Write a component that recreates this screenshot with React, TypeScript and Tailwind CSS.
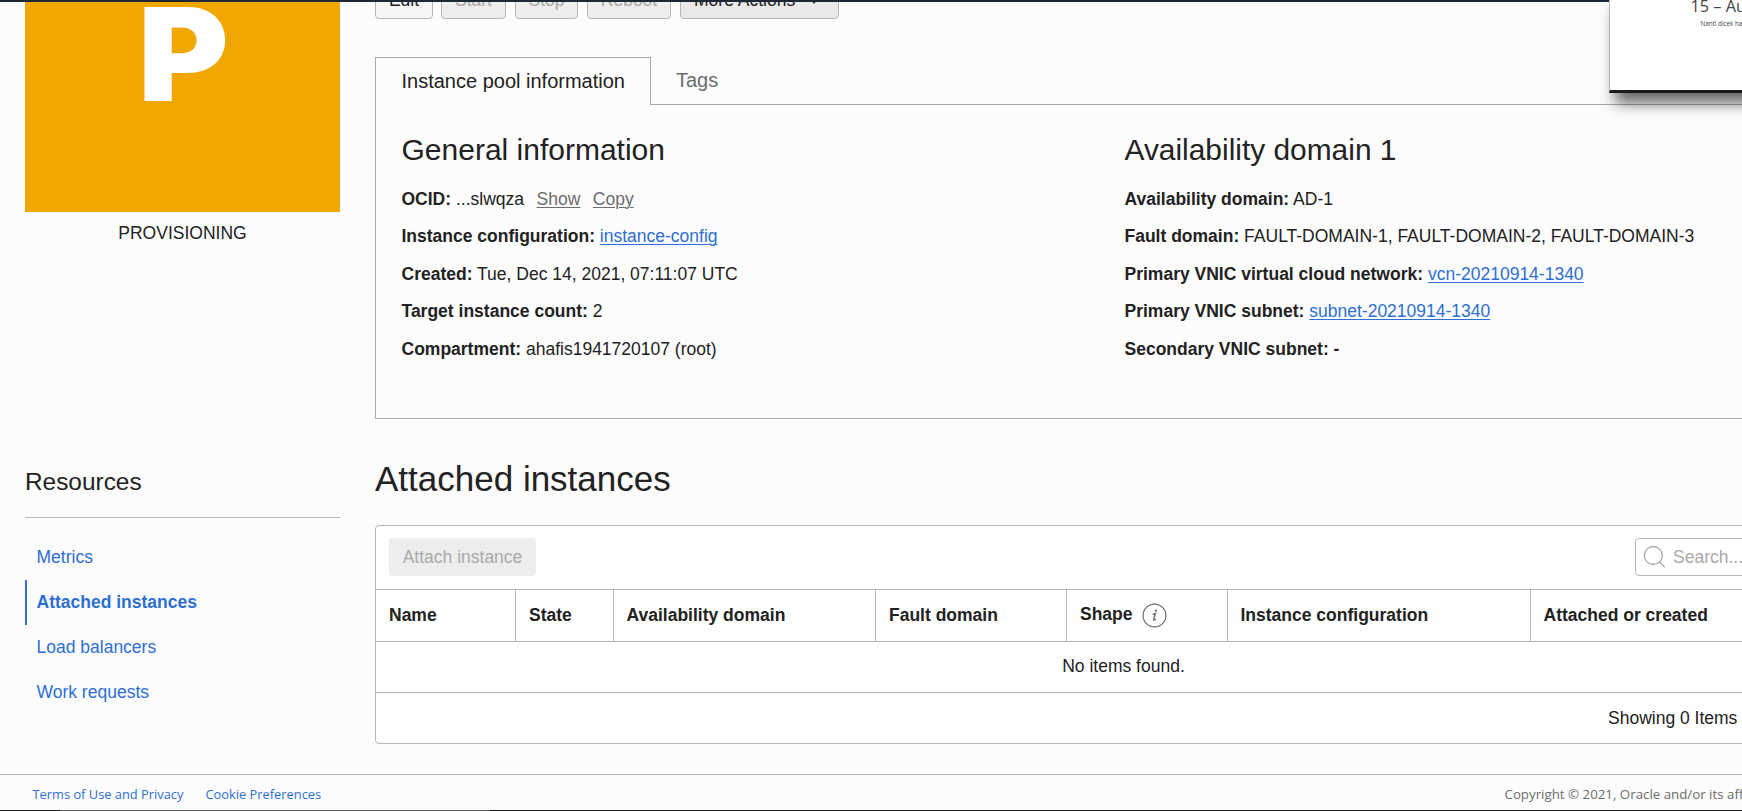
import type { ReactNode } from "react";

function TopButton({ className, children }: { className: string; children: ReactNode }) {
  return (
    <button
      className={`flex h-[38px] shrink-0 items-center rounded-[4px] border border-[#b3b7bf] text-[17.5px] leading-5 whitespace-nowrap ${className}`}
    >
      {children}
    </button>
  );
}

function Field({ label, children }: { label: string; children: ReactNode }) {
  return (
    <div className="h-[37.5px] whitespace-nowrap">
      <span className="font-bold">{label}</span> {children}
    </div>
  );
}

function Link({ children }: { children: ReactNode }) {
  return (
    <a className="text-[#2d6fd2] underline decoration-1 underline-offset-[2px]">{children}</a>
  );
}

function InfoIcon() {
  return (
    <svg width="25" height="25" viewBox="0 0 25 25" fill="none" className="shrink-0">
      <circle cx="12.5" cy="12.5" r="11.4" stroke="#6c6c6c" strokeWidth="1.2" />
      <circle cx="13.9" cy="7.7" r="1.15" fill="#6c6c6c" />
      <path d="M10.6 11.4l2.8-.9-1.7 5.8c-.3 1.2.9.9 2.2-.3" stroke="#6c6c6c" strokeWidth="1.4" />
    </svg>
  );
}

function SearchIcon() {
  return (
    <svg width="24" height="24" viewBox="0 0 24 24" fill="none" stroke="#a9a9a9" strokeWidth="1.3" className="shrink-0">
      <circle cx="10.3" cy="10.5" r="9" />
      <path d="M16.5 16.8l5.3 5.6" />
    </svg>
  );
}

function Sidebar() {
  return (
    <aside className="flex w-[315px] shrink-0 flex-col">
      <div className="h-[212px] bg-[#f0a702] pl-[113px]">
        <span className="block h-[157px] origin-left scale-x-[1.07] font-['Inter'] text-[129px] leading-[108px] font-black text-white">
          P
        </span>
      </div>
      <div className="mt-[9px] text-center text-[17.5px] leading-[24px]">PROVISIONING</div>
      <h2 className="mt-[222px] h-[51px] border-b border-[#b5b8bc] text-[24.4px] leading-[30px]">Resources</h2>
      <nav className="mt-[17px] flex flex-col text-[17.5px] text-[#2d6fd2]">
        <a className="flex h-[45px] items-center pl-[11.5px]">Metrics</a>
        <a className="flex h-[45px] items-center border-l-2 border-[#2d6fd2] pl-[9.5px] font-bold">
          Attached instances
        </a>
        <a className="flex h-[45px] items-center pl-[11.5px]">Load balancers</a>
        <a className="flex h-[45px] items-center pl-[11.5px]">Work requests</a>
      </nav>
    </aside>
  );
}

function InfoPanel() {
  return (
    <section>
      <div className="relative z-10 -mb-px flex h-[48px]">
        <div className="flex w-[276px] items-center border border-b-0 border-[#a9a9a9] bg-[#fcfcfc] pb-[2px] pl-[25.5px] text-[20px] whitespace-nowrap">
          Instance pool information
        </div>
        <div className="flex h-[46px] items-center pl-[25px] text-[20px] text-[#6c6c6c]">Tags</div>
      </div>
      <div className="flex h-[315px] border border-[#a9a9a9] pt-[26px] pl-[25.5px] text-[17.5px] leading-[24px]">
        <div className="w-[723px] shrink-0">
          <h2 className="mb-[17.6px] text-[30px] leading-[38px] whitespace-nowrap">General information</h2>
          <Field label="OCID:">
            ...slwqza
            <a className="ml-[12.5px] text-[#6c6c6c] underline decoration-1 underline-offset-[2px]">Show</a>
            <a className="ml-[12.5px] text-[#6c6c6c] underline decoration-1 underline-offset-[2px]">Copy</a>
          </Field>
          <Field label="Instance configuration:">
            <Link>instance-config</Link>
          </Field>
          <Field label="Created:">Tue, Dec 14, 2021, 07:11:07 UTC</Field>
          <Field label="Target instance count:">2</Field>
          <Field label="Compartment:">ahafis1941720107 (root)</Field>
        </div>
        <div className="shrink-0">
          <h2 className="mb-[17.6px] text-[29.9px] leading-[38px] whitespace-nowrap">Availability domain 1</h2>
          <Field label="Availability domain:">AD-1</Field>
          <Field label="Fault domain:">FAULT-DOMAIN-1, FAULT-DOMAIN-2, FAULT-DOMAIN-3</Field>
          <Field label="Primary VNIC virtual cloud network:">
            <Link>vcn-20210914-1340</Link>
          </Field>
          <Field label="Primary VNIC subnet:">
            <Link>subnet-20210914-1340</Link>
          </Field>
          <Field label="Secondary VNIC subnet:">
            <span className="font-bold">-</span>
          </Field>
        </div>
      </div>
    </section>
  );
}

function InstancesTable() {
  return (
    <div className="h-[219px] rounded-[4px] border border-[#b3b7bf] bg-white text-[17.5px]">
      <div className="flex h-[63px] items-start pt-[12px] pl-[13px]">
        <button className="flex h-[38px] w-[147px] items-center justify-center rounded-[4px] bg-[#ededed] whitespace-nowrap text-[#a9a9a9]">
          Attach instance
        </button>
        <div className="ml-[1099px] flex h-[38px] w-[224px] items-center rounded-[4px] border border-[#b3b7bf] pl-[7px] text-[#a9a9a9]">
          <SearchIcon />
          <span className="ml-[6px]">Search...</span>
        </div>
      </div>
      <div className="grid h-[53px] grid-cols-[140px_98px_262px_191px_161px_303px_1fr] divide-x divide-[#b3b7bf] border-y border-[#b3b7bf] font-bold whitespace-nowrap">
        <div className="flex items-center pl-[13px]">Name</div>
        <div className="flex items-center pl-[13px]">State</div>
        <div className="flex items-center pl-[12.5px]">Availability domain</div>
        <div className="flex items-center pl-[13px]">Fault domain</div>
        <div className="flex items-center gap-[9.5px] pl-[13px]">
          <span className="-mt-[2px]">Shape</span>
          <InfoIcon />
        </div>
        <div className="flex items-center pl-[12.5px]">Instance configuration</div>
        <div className="flex items-center pl-[12.5px]">Attached or created</div>
      </div>
      <div className="flex h-[51px] items-center justify-center border-b border-[#b3b7bf] pb-[2px]">No items found.</div>
      <div className="flex h-[50px] items-center pl-[1232px] whitespace-nowrap">Showing 0 Items</div>
    </div>
  );
}

export default function App() {
  return (
    <div className="relative flex h-[811px] w-full flex-col overflow-hidden bg-[#fcfcfc] font-['Liberation_Sans',Arial,sans-serif] text-[#222222]">
      <div className="flex h-[774px] shrink-0 gap-[35px] pl-[25px]">
        <Sidebar />
        <main className="w-[1497px] shrink-0">
          <div className="flex h-[19px] items-end">
            <TopButton className="mr-2 w-[58px] justify-center bg-[#f6f6f6]">Edit</TopButton>
            <TopButton className="mr-[9px] w-[65px] justify-center bg-[#ededed] text-[#a9a9a9]">Start</TopButton>
            <TopButton className="mr-[9px] w-[63px] justify-center bg-[#ededed] text-[#a9a9a9]">Stop</TopButton>
            <TopButton className="mr-[9px] w-[84px] justify-center bg-[#ededed] text-[#a9a9a9]">Reboot</TopButton>
            <TopButton className="w-[159px] bg-[#e9e9e9] pl-[13px]">
              More Actions
              <svg width="10" height="8" viewBox="0 0 10 8" className="ml-[14px]">
                <path d="M0 1h10L5 8z" fill="#222222" />
              </svg>
            </TopButton>
          </div>
          <div className="h-[38px]" />
          <InfoPanel />
          <h1 className="mt-[40px] mb-[26px] text-[35px] leading-[40px]">Attached instances</h1>
          <InstancesTable />
        </main>
      </div>
      <footer className="flex h-[37px] shrink-0 items-center border-t border-[#b3b7bf] pt-[3px] pl-[32.5px] font-['Open_Sans',sans-serif] text-[12.85px] whitespace-nowrap text-[#2d6fd2]">
        <a className="w-[173px] shrink-0">Terms of Use and Privacy</a>
        <a className="w-[1299px] shrink-0">Cookie Preferences</a>
        <span className="text-[13.3px] text-[#6c6c6c]">Copyright © 2021, Oracle and/or its affiliates. All rights reserved.</span>
      </footer>

      <div className="absolute inset-x-0 top-0 h-[2px] bg-[#1f2733]" />
      <div className="absolute inset-x-0 bottom-0 flex h-px bg-[#1c1c1c]">
        <div className="ml-[60px] w-[430px] bg-[#5c5c5c]" />
      </div>
      <div className="absolute top-0 left-[1609px] h-[93px] w-[160px] border-b-[3px] border-l border-b-[#1c1c1c] border-l-[#b8b8b8] bg-white pl-[80.5px] font-['Open_Sans',sans-serif] whitespace-nowrap shadow-[6px_10px_14px_rgba(0,0,0,0.6)]">
        <div className="-mt-[5px] text-[16.3px] leading-[23px] text-[#444444]">15 – Auto</div>
        <div className="mt-[2px] ml-[10px] text-[6.3px] leading-[8px] text-[#444444]">Nanti dicek hasilnya</div>
      </div>
    </div>
  );
}
